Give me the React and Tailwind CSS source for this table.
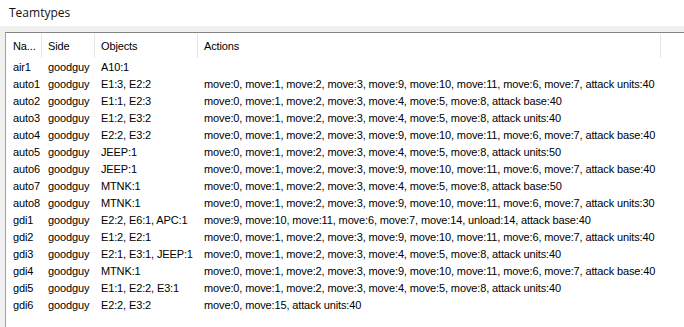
import React from 'react';

const columns = [
  { label: 'Na...', width: 'w-[36px]', pad: 'pl-[7px]' },
  { label: 'Side', width: 'w-[53px]', pad: 'pl-[6px]' },
  { label: 'Objects', width: 'w-[103px]', pad: 'pl-[6px]' },
  { label: 'Actions', width: 'w-[463px]', pad: 'pl-[6px]' },
];

const A = 'move:0, move:1, move:2, move:3, move:9, move:10, move:11, move:6, move:7, ';
const B = 'move:0, move:1, move:2, move:3, move:4, move:5, move:8, ';

const teams = [
  ['air1', 'goodguy', 'A10:1', ''],
  ['auto1', 'goodguy', 'E1:3, E2:2', A + 'attack units:40'],
  ['auto2', 'goodguy', 'E1:1, E2:3', B + 'attack base:40'],
  ['auto3', 'goodguy', 'E1:2, E3:2', B + 'attack units:40'],
  ['auto4', 'goodguy', 'E2:2, E3:2', A + 'attack base:40'],
  ['auto5', 'goodguy', 'JEEP:1', B + 'attack units:50'],
  ['auto6', 'goodguy', 'JEEP:1', A + 'attack base:40'],
  ['auto7', 'goodguy', 'MTNK:1', B + 'attack base:50'],
  ['auto8', 'goodguy', 'MTNK:1', A + 'attack units:30'],
  ['gdi1', 'goodguy', 'E2:2, E6:1, APC:1', 'move:9, move:10, move:11, move:6, move:7, move:14, unload:14, attack base:40'],
  ['gdi2', 'goodguy', 'E1:2, E2:1', A + 'attack units:40'],
  ['gdi3', 'goodguy', 'E2:1, E3:1, JEEP:1', B + 'attack units:40'],
  ['gdi4', 'goodguy', 'MTNK:1', A + 'attack base:40'],
  ['gdi5', 'goodguy', 'E1:1, E2:2, E3:1', B + 'attack units:40'],
  ['gdi6', 'goodguy', 'E2:2, E3:2', 'move:0, move:15, attack units:40'],
];

const listFont = { fontFamily: '"Liberation Sans", Arial, sans-serif' };

export default function App() {
  return (
    <div className="w-[684px] h-[327px] bg-[#f0f0f0] overflow-hidden flex flex-col">
      {/* Window title */}
      <div
        className="h-[26px] shrink-0 bg-white pl-[9px] flex items-center text-[12px] text-[#111]"
        style={{ fontFamily: '"Open Sans", "Noto Sans", sans-serif' }}
      >
        Teamtypes
      </div>

      {/* List view */}
      <div className="flex-1 min-h-0 pl-[5px] pt-[6px]">
        <div
          className="h-full bg-white border-l border-t border-l-[#a0a0a0] border-t-[#838383] text-[11px] tracking-[-0.13px] text-black whitespace-nowrap overflow-hidden"
          style={listFont}
        >
          <div className="flex h-[25px] pt-[1px]">
            {columns.map((col) => (
              <div
                key={col.label}
                className={`${col.width} ${col.pad} shrink-0 flex items-center border-r border-[#e5e5e5] pt-[1px]`}
              >
                {col.label}
              </div>
            ))}
          </div>

          {teams.map((t) => (
            <div key={t[0]} className="flex h-[17px] items-center pt-[1px]">
              {t.map((cell, i) => (
                <div key={i} className={`${columns[i].width} ${columns[i].pad} shrink-0 ${i === 3 ? 'overflow-visible' : 'overflow-hidden'}`}>
                  {cell}
                </div>
              ))}
            </div>
          ))}
        </div>
      </div>
    </div>
  );
}
